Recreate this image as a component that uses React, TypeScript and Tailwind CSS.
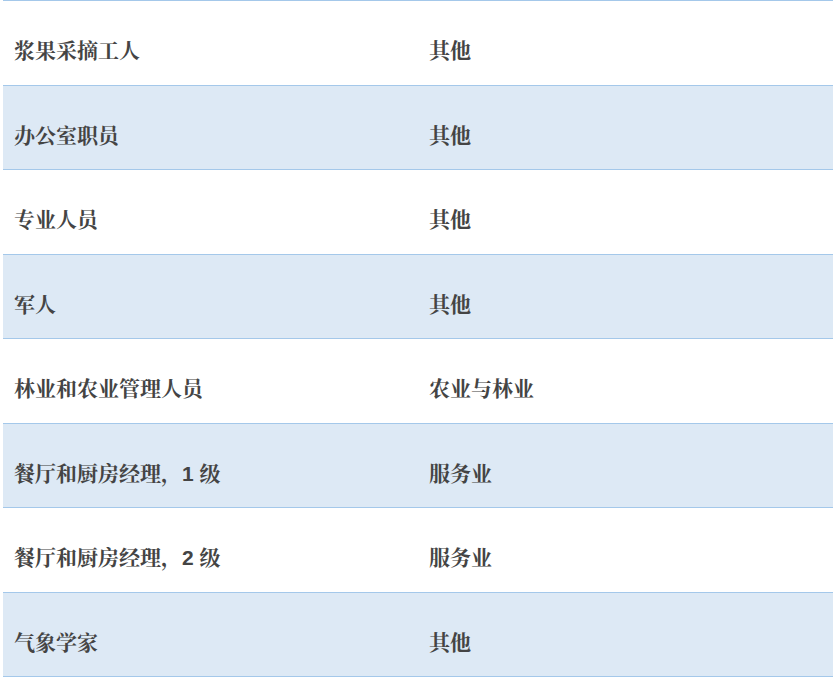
import React from "react";

const rows: [string, string][] = [
  ["浆果采摘工人", "其他"],
  ["办公室职员", "其他"],
  ["专业人员", "其他"],
  ["军人", "其他"],
  ["林业和农业管理人员", "农业与林业"],
  ["餐厅和厨房经理，1 级", "服务业"],
  ["餐厅和厨房经理，2 级", "服务业"],
  ["气象学家", "其他"],
];

export default function App() {
  return (
    <div className="bg-white w-[834px] h-[679px] pl-[3px] pr-[1px]" style={{ fontFamily: '"Liberation Sans", "Noto Serif CJK SC", "AR PL UMing CN", serif' }}>
      <div className="border-t border-[#a4c8ea]">
        {rows.map(([a, b], i) => (
          <div
            key={i}
            className={`grid grid-cols-2 h-[84.5px] border-b border-[#a4c8ea] ${i % 2 === 1 ? "bg-[#dde9f5]" : "bg-white"}`}
          >
            <div className="pl-[11px] pr-3 pt-[38px] text-[21px] leading-[24px] font-bold text-[#444444]">{a}</div>
            <div className="pl-[11px] pr-3 pt-[38px] text-[21px] leading-[24px] font-bold text-[#444444]">{b}</div>
          </div>
        ))}
      </div>
    </div>
  );
}
